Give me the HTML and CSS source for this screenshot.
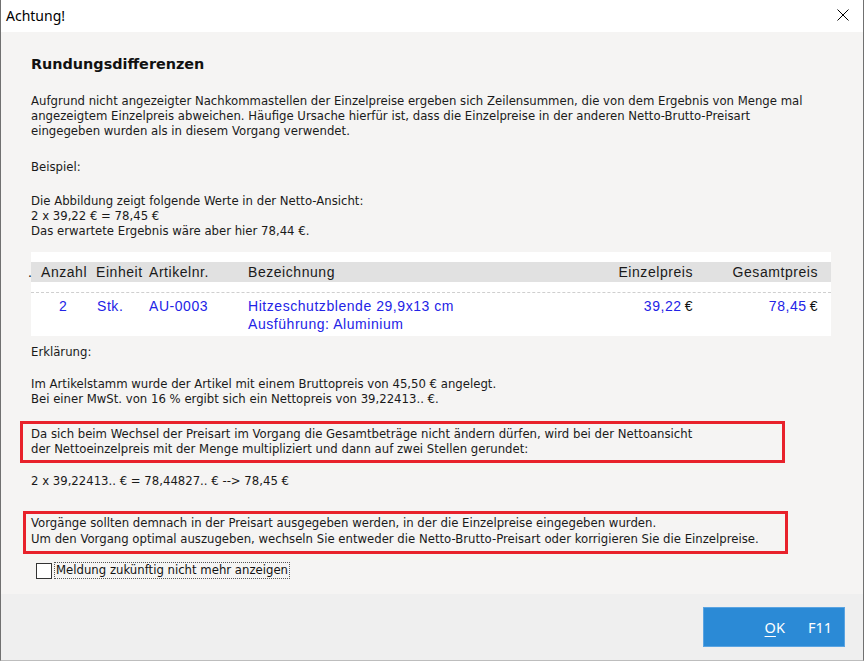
FILE: index.html
```html
<!DOCTYPE html>
<html lang="de">
<head>
<meta charset="utf-8">
<title>Achtung!</title>
<link rel="stylesheet" href="styles.css">
</head>
<body>
<div class="window">
  <div class="titlebar">
    <span class="title">Achtung!</span>
    <svg class="close" width="12" height="12" viewBox="0 0 12 12"><path d="M0.5 0.5 L11.5 11.5 M11.5 0.5 L0.5 11.5" stroke="#000" stroke-width="1" fill="none"/></svg>
  </div>
  <div class="content">
    <h1 class="heading">Rundungsdifferenzen</h1>
    <p class="para p-intro">Aufgrund nicht angezeigter Nachkommastellen der Einzelpreise ergeben sich Zeilensummen, die von dem Ergebnis von Menge mal<br>angezeigtem Einzelpreis abweichen. Häufige Ursache hierfür ist, dass die Einzelpreise in der anderen Netto-Brutto-Preisart<br>eingegeben wurden als in diesem Vorgang verwendet.</p>
    <p class="para p-example">Beispiel:</p>
    <p class="para p-values">Die Abbildung zeigt folgende Werte in der Netto-Ansicht:<br>2 x 39,22 € = 78,45 €<br>Das erwartete Ergebnis wäre aber hier 78,44 €.</p>
    <div class="grid-panel">
      <div class="grid-head">
        <span class="c-pos">.</span>
        <span class="c-qty">Anzahl</span>
        <span class="c-unit">Einheit</span>
        <span class="c-art">Artikelnr.</span>
        <span class="c-desc">Bezeichnung</span>
        <span class="c-price">Einzelpreis</span>
        <span class="c-total">Gesamtpreis</span>
      </div>
      <div class="grid-row">
        <span class="c-pos"></span>
        <span class="c-qty val">2</span>
        <span class="c-unit val">Stk.</span>
        <span class="c-art val">AU-0003</span>
        <span class="c-desc val">Hitzeschutzblende 29,9x13 cm<br>Ausführung: Aluminium</span>
        <span class="c-price"><span class="val">39,22</span><span class="cur">€</span></span>
        <span class="c-total"><span class="val">78,45</span><span class="cur">€</span></span>
      </div>
    </div>
    <p class="para p-explain">Erklärung:</p>
    <p class="para p-stock">Im Artikelstamm wurde der Artikel mit einem Bruttopreis von 45,50 € angelegt.<br>Bei einer MwSt. von 16 % ergibt sich ein Nettopreis von 39,22413.. €.</p>
    <p class="para boxed box-one">Da sich beim Wechsel der Preisart im Vorgang die Gesamtbeträge nicht ändern dürfen, wird bei der Nettoansicht<br>der Nettoeinzelpreis mit der Menge multipliziert und dann auf zwei Stellen gerundet:</p>
    <p class="para p-calc">2 x 39,22413.. € = 78,44827.. € --&gt; 78,45 €</p>
    <p class="para boxed box-two">Vorgänge sollten demnach in der Preisart ausgegeben werden, in der die Einzelpreise eingegeben wurden.<br>Um den Vorgang optimal auszugeben, wechseln Sie entweder die Netto-Brutto-Preisart oder korrigieren Sie die Einzelpreise.</p>
    <label class="check">
      <span class="box"></span>
      <span class="check-label">Meldung zukünftig nicht mehr anzeigen</span>
    </label>
  </div>
  <div class="footer">
    <button class="ok-btn"><span class="ok"><u>O</u>K</span><span class="key">F11</span></button>
  </div>
</div>
</body>
</html>
```
FILE: styles.css
```css
* { box-sizing: border-box; }
html, body { margin: 0; padding: 0; background: #ffffff; }

.window {
  width: 864px;
  height: 661px;
  border-left: 1px solid #707070;
  border-right: 1px solid #707070;
  border-bottom: 1px solid #bdbdbd;
  display: flex;
  flex-direction: column;
  font-family: "DejaVu Sans", Tahoma, sans-serif;
  overflow: hidden;
}

/* title bar */
.titlebar {
  height: 32px;
  flex: none;
  background: #ffffff;
  display: flex;
  align-items: center;
  justify-content: space-between;
  padding: 0 14px 0 5px;
}
.title {
  font-family: "Noto Sans", "Open Sans", sans-serif;
  font-size: 14px;
  color: #000;
  margin-top: -2px;
}
.close { margin-top: -2px; }

/* message body */
.content {
  flex: 1;
  background: #f5f4f3;
  padding: 22px 30px 0 30px;
  color: #1a1a1a;
  font-size: 11.7px;
  line-height: 15px;
}

.heading {
  font-size: 14.4px;
  font-weight: bold;
  margin: 0;
  line-height: 20px;
  color: #111;
}

.para {
  margin: 0;
  white-space: nowrap;
}
.p-intro { margin-top: 20px; }
.p-example { margin-top: 21px; }
.p-values { margin-top: 19px; }
.p-explain { margin-top: 9px; }
.p-stock { margin-top: 17px; }
.p-calc { margin-top: 11px; }

/* example grid */
.grid-panel {
  background: #ffffff;
  margin-top: 13px;
  width: 800px;
  height: 84px;
  padding-top: 10px;
  font-family: "Liberation Sans", Arial, sans-serif;
  font-size: 14px;
  letter-spacing: 0.55px;
  color: #1a1a1a;
}
.grid-head, .grid-row {
  display: grid;
  grid-template-columns: 10px 55px 53px 99px 312px 133px 125px;
}
.grid-head {
  background: #e1e1e1;
  height: 20px;
  line-height: 21px;
  position: relative;
}
.grid-head::after {
  content: "";
  position: absolute;
  left: 0; right: 0; top: 30px;
  border-top: 1px dashed #cfcfcf;
}
.grid-row {
  padding-top: 15px;
  line-height: 18px;
}
.c-pos { overflow: hidden; }
.grid-head .c-pos { margin-left: -3px; }
.grid-row .c-qty { padding-left: 18px; }
.grid-row .c-unit { padding-left: 1px; }
.c-price, .c-total { text-align: right; }
.val { color: #2323e6; }
.cur { color: #111; margin-left: 3px; }

/* highlighted notes */
.boxed {
  border: 3px solid #e8212b;
  line-height: 15px;
}
.box-one {
  width: 765px;
  margin-top: 13.5px;
  margin-left: -11px;
  padding: 3px 0 3px 8px;
}
.box-two {
  width: 765px;
  margin-top: 22.5px;
  margin-left: -8px;
  padding: 1px 0 4px 5px;
  line-height: 16px;
}

/* checkbox */
.check {
  display: flex;
  align-items: center;
  margin: 8px 0 0 5px;
}
.box {
  width: 16px;
  height: 16px;
  border: 1px solid #333;
  background: #fff;
  flex: none;
}
.check-label {
  margin-left: 2px;
  border: 1px dotted #555;
  padding: 0 1px 0 1px;
  line-height: 15px;
  color: #111;
}

/* button row */
.footer {
  height: 66px;
  flex: none;
  background: #efefef;
  display: flex;
  justify-content: flex-end;
  align-items: flex-start;
  padding: 13px 18px 0 0;
}
.ok-btn {
  width: 142px;
  height: 40px;
  background: #2b8ad6;
  border: 1px solid #5aa4e2;
  color: #fff;
  font-family: "Noto Sans", "Open Sans", sans-serif;
  font-size: 14.5px;
  display: flex;
  align-items: center;
  justify-content: flex-end;
  padding: 0 12px 0 0;
  gap: 23px;
}
.ok u { text-decoration-thickness: 1px; text-underline-offset: 3px; }
```
